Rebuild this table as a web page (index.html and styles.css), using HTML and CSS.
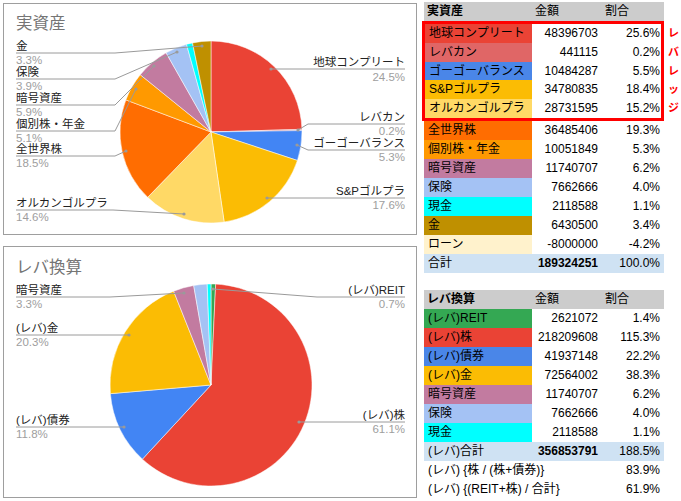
FILE: index.html
```html
<!DOCTYPE html>
<html lang="ja">
<head>
<meta charset="utf-8">
<title>資産</title>
<link rel="stylesheet" href="styles.css">
</head>
<body>
<div class="page">
  <div class="charts">
    <div class="chart">
      <svg class="pie" width="412" height="230" viewBox="4 4 412 230" xmlns="http://www.w3.org/2000/svg">
        <text class="ttl" x="16" y="29">実資産</text>
        <g class="slices">
          <path fill="#ea4335" d="M211 132 L211 41 A91 91 0 0 1 301.96 129.30 Z"/>
          <path fill="#e06666" d="M211 132 L301.96 129.30 A91 91 0 0 1 301.99 130.57 Z"/>
          <path fill="#4285f4" d="M211 132 L301.99 130.57 A91 91 0 0 1 297.43 160.47 Z"/>
          <path fill="#fbbc04" d="M211 132 L297.43 160.47 A91 91 0 0 1 224.16 222.04 Z"/>
          <path fill="#ffd966" d="M211 132 L224.16 222.04 A91 91 0 0 1 147.67 197.35 Z"/>
          <path fill="#ff6d01" d="M211 132 L147.67 197.35 A91 91 0 0 1 125.85 99.89 Z"/>
          <path fill="#ff9900" d="M211 132 L125.85 99.89 A91 91 0 0 1 140.28 74.73 Z"/>
          <path fill="#c27ba0" d="M211 132 L140.28 74.73 A91 91 0 0 1 166.08 52.86 Z"/>
          <path fill="#a4c2f4" d="M211 132 L166.08 52.86 A91 91 0 0 1 186.53 44.35 Z"/>
          <path fill="#00ffff" d="M211 132 L186.53 44.35 A91 91 0 0 1 192.50 42.90 Z"/>
          <path fill="#bf9000" d="M211 132 L192.50 42.90 A91 91 0 0 1 211 41 Z"/>
        </g>
        <g class="leaders">
          <polyline points="16,53 115,53 202,46"/>
          <polyline points="16,79 115,79 177,52"/>
          <polyline points="16,105 115,105 154,66"/>
          <polyline points="16,131 115,131 136,89"/>
          <polyline points="16,156 115,156 126,151"/>
          <polyline points="16,210 113,210 184,214"/>
          <polyline points="271,69 405,69"/>
          <polyline points="298,130 308,124 405,124"/>
          <polyline points="297,145 308,150 405,150"/>
          <polyline points="267,198 405,198"/>
        </g>
        <g class="dots">
          <circle cx="202" cy="46" r="1.6"/>
          <circle cx="177" cy="52" r="1.6"/>
          <circle cx="154" cy="66" r="1.6"/>
          <circle cx="136" cy="89" r="1.6"/>
          <circle cx="126" cy="151" r="1.6"/>
          <circle cx="184" cy="214" r="1.6"/>
          <circle cx="271" cy="69" r="1.6"/>
          <circle cx="298" cy="130" r="1.6"/>
          <circle cx="297" cy="145" r="1.6"/>
          <circle cx="267" cy="198" r="1.6"/>
        </g>
        <g class="labels">
          <text class="lbl" x="16" y="50">金</text>
          <text class="pct" x="16" y="63.5">3.3%</text>
          <text class="lbl" x="16" y="76">保険</text>
          <text class="pct" x="16" y="89.5">3.9%</text>
          <text class="lbl" x="16" y="102">暗号資産</text>
          <text class="pct" x="16" y="115.5">5.9%</text>
          <text class="lbl" x="16" y="128">個別株・年金</text>
          <text class="pct" x="16" y="141.5">5.1%</text>
          <text class="lbl" x="16" y="153">全世界株</text>
          <text class="pct" x="16" y="166.5">18.5%</text>
          <text class="lbl" x="16" y="207">オルカンゴルプラ</text>
          <text class="pct" x="16" y="220.5">14.6%</text>
        </g>
        <g class="labels end">
          <text class="lbl" x="405" y="66">地球コンプリート</text>
          <text class="pct" x="405" y="80.5">24.5%</text>
          <text class="lbl" x="405" y="121">レバカン</text>
          <text class="pct" x="405" y="134.5">0.2%</text>
          <text class="lbl" x="405" y="147">ゴーゴーバランス</text>
          <text class="pct" x="405" y="160.5">5.3%</text>
          <text class="lbl" x="405" y="195">S&amp;Pゴルプラ</text>
          <text class="pct" x="405" y="208.5">17.6%</text>
        </g>
      </svg>
    </div>
    <div class="chart">
      <svg class="pie" width="412" height="250" viewBox="4 247 412 250" xmlns="http://www.w3.org/2000/svg">
        <text class="ttl" x="16" y="273">レバ換算</text>
        <g class="slices">
          <path fill="#34a853" d="M211 385 L211 284 A101 101 0 0 1 215.66 284.11 Z"/>
          <path fill="#ea4335" d="M211 385 L215.66 284.11 A101 101 0 1 1 142.40 459.13 Z"/>
          <path fill="#4285f4" d="M211 385 L142.40 459.13 A101 101 0 0 1 110.37 393.65 Z"/>
          <path fill="#fbbc04" d="M211 385 L110.37 393.65 A101 101 0 0 1 173.64 291.16 Z"/>
          <path fill="#c27ba0" d="M211 385 L173.64 291.16 A101 101 0 0 1 193.69 285.49 Z"/>
          <path fill="#a4c2f4" d="M211 385 L193.69 285.49 A101 101 0 0 1 207.23 284.07 Z"/>
          <path fill="#00ffff" d="M211 385 L207.23 284.07 A101 101 0 0 1 211 284 Z"/>
        </g>
        <g class="leaders">
          <polyline points="16,297 110,297 184,293"/>
          <polyline points="16,335 129,335"/>
          <polyline points="16,427 124,427"/>
          <polyline points="213,289 317,297 405,297"/>
          <polyline points="299,422 405,422"/>
        </g>
        <g class="dots">
          <circle cx="184" cy="293" r="1.6"/>
          <circle cx="129" cy="335" r="1.6"/>
          <circle cx="124" cy="427" r="1.6"/>
          <circle cx="213" cy="289" r="1.6"/>
          <circle cx="299" cy="422" r="1.6"/>
        </g>
        <g class="labels">
          <text class="lbl" x="16" y="294">暗号資産</text>
          <text class="pct" x="16" y="308">3.3%</text>
          <text class="lbl" x="16" y="332">(レバ)金</text>
          <text class="pct" x="16" y="346">20.3%</text>
          <text class="lbl" x="16" y="424">(レバ)債券</text>
          <text class="pct" x="16" y="438">11.8%</text>
        </g>
        <g class="labels end">
          <text class="lbl" x="405" y="294">(レバ)REIT</text>
          <text class="pct" x="405" y="308">0.7%</text>
          <text class="lbl" x="405" y="419">(レバ)株</text>
          <text class="pct" x="405" y="433">61.1%</text>
        </g>
      </svg>
    </div>
  </div>

  <div class="tables">
    <div class="sheet">
      <div class="row head"><span class="c1">実資産</span><span class="c2">金額</span><span class="c3">割合</span></div>
      <div class="lev-group">
        <div class="lev-box">
          <div class="row"><span class="c1 k-earth">地球コンプリート</span><span class="c2">48396703</span><span class="c3">25.6%</span></div>
          <div class="row"><span class="c1 k-levkan">レバカン</span><span class="c2">441115</span><span class="c3">0.2%</span></div>
          <div class="row"><span class="c1 k-blue">ゴーゴーバランス</span><span class="c2">10484287</span><span class="c3">5.5%</span></div>
          <div class="row"><span class="c1 k-yellow">S&amp;Pゴルプラ</span><span class="c2">34780835</span><span class="c3">18.4%</span></div>
          <div class="row"><span class="c1 k-light">オルカンゴルプラ</span><span class="c2">28731595</span><span class="c3">15.2%</span></div>
        </div>
        <div class="lev-note"><span>レ</span><span>バ</span><span>レ</span><span>ッ</span><span>ジ</span></div>
      </div>
      <div class="row"><span class="c1 k-world">全世界株</span><span class="c2">36485406</span><span class="c3">19.3%</span></div>
      <div class="row"><span class="c1 k-orange">個別株・年金</span><span class="c2">10051849</span><span class="c3">5.3%</span></div>
      <div class="row"><span class="c1 k-crypto">暗号資産</span><span class="c2">11740707</span><span class="c3">6.2%</span></div>
      <div class="row"><span class="c1 k-ins">保険</span><span class="c2">7662666</span><span class="c3">4.0%</span></div>
      <div class="row"><span class="c1 k-cash">現金</span><span class="c2">2118588</span><span class="c3">1.1%</span></div>
      <div class="row"><span class="c1 k-gold">金</span><span class="c2">6430500</span><span class="c3">3.4%</span></div>
      <div class="row"><span class="c1 k-loan">ローン</span><span class="c2">-8000000</span><span class="c3">-4.2%</span></div>
      <div class="row total"><span class="c1">合計</span><span class="c2">189324251</span><span class="c3">100.0%</span></div>
    </div>

    <div class="sheet">
      <div class="row head"><span class="c1">レバ換算</span><span class="c2">金額</span><span class="c3">割合</span></div>
      <div class="row"><span class="c1 k-green">(レバ)REIT</span><span class="c2">2621072</span><span class="c3">1.4%</span></div>
      <div class="row"><span class="c1 k-earth">(レバ)株</span><span class="c2">218209608</span><span class="c3">115.3%</span></div>
      <div class="row"><span class="c1 k-blue">(レバ)債券</span><span class="c2">41937148</span><span class="c3">22.2%</span></div>
      <div class="row"><span class="c1 k-yellow">(レバ)金</span><span class="c2">72564002</span><span class="c3">38.3%</span></div>
      <div class="row"><span class="c1 k-crypto">暗号資産</span><span class="c2">11740707</span><span class="c3">6.2%</span></div>
      <div class="row"><span class="c1 k-ins">保険</span><span class="c2">7662666</span><span class="c3">4.0%</span></div>
      <div class="row"><span class="c1 k-cash">現金</span><span class="c2">2118588</span><span class="c3">1.1%</span></div>
      <div class="row total"><span class="c1">(レバ)合計</span><span class="c2">356853791</span><span class="c3">188.5%</span></div>
      <div class="row note"><span class="wide">(レバ) {株 / (株+債券)}</span><span class="c3">83.9%</span></div>
      <div class="row note"><span class="wide">(レバ) {(REIT+株) / 合計}</span><span class="c3">61.9%</span></div>
    </div>
  </div>
</div>
</body>
</html>
```

FILE: styles.css
```css
html, body {
  margin: 0;
  padding: 0;
  background: #ffffff;
}

body {
  font-family: "Liberation Sans", "Noto Sans CJK JP", sans-serif;
  font-size: 12px;
  color: #000000;
}

.page {
  display: flex;
  align-items: flex-start;
  width: 681px;
  height: 501px;
  overflow: hidden;
}

/* ---------- charts ---------- */
.charts {
  display: flex;
  flex-direction: column;
  gap: 11px;
  margin-left: 3px;
  padding-top: 3px;
  flex-shrink: 0;
}

.chart {
  border: 1px solid #9e9e9e;
  background: #ffffff;
}

.pie {
  display: block;
  font-family: "Liberation Sans", "Noto Sans CJK JP", sans-serif;
}

.slices path {
  stroke: #ffffff;
  stroke-width: 0.5;
}

.leaders polyline {
  fill: none;
  stroke: #9a9a9a;
  stroke-width: 1;
}

.dots circle {
  fill: #9a9a9a;
}

.ttl {
  font-size: 16.5px;
  fill: #757575;
}

.lbl {
  font-size: 11.5px;
  fill: #222222;
}

.pct {
  font-size: 11.5px;
  fill: #9e9e9e;
}

.labels.end text {
  text-anchor: end;
}

/* ---------- tables ---------- */
.tables {
  display: flex;
  flex-direction: column;
  gap: 17px;
  margin-left: 7px;
  padding-top: 2px;
  flex-shrink: 0;
}

.sheet {
  display: flex;
  flex-direction: column;
}

.row {
  display: grid;
  grid-template-columns: 108px 69px 63px;
  width: 240px;
  height: 19px;
  line-height: 19px;
  white-space: nowrap;
}

.row > span {
  display: block;
  overflow: hidden;
}

.c1 {
  padding-left: 4px;
}

.c2 {
  text-align: right;
  padding-right: 3px;
}

.c3 {
  text-align: right;
  padding-right: 4px;
}

.head {
  background: #cccccc;
}

.head .c1 {
  padding-left: 3px;
  font-weight: bold;
}

.head .c2 {
  text-align: left;
  padding-left: 3px;
  padding-right: 0;
}

.head .c3 {
  text-align: left;
  padding-left: 4px;
  padding-right: 0;
}

.total {
  background: #cfe2f3;
}

.total .c2 {
  font-weight: bold;
}

.note .wide {
  grid-column: 1 / 3;
  padding-left: 4px;
}

/* leverage group with red frame */
.lev-group {
  display: flex;
  align-items: flex-start;
}

.lev-box {
  border: 3px solid #ff0000;
  margin-left: -2px;
}

.lev-box .row {
  grid-template-columns: 107px 69px 60px;
  width: 236px;
  height: 18.8px;
  line-height: 18.8px;
}

.lev-box .c3 {
  padding-right: 1px;
}

.lev-note {
  display: flex;
  flex-direction: column;
  padding: 3px 0 0 4px;
  color: #ff0000;
  font-weight: bold;
  font-size: 11px;
}

.lev-note span {
  height: 18.8px;
  line-height: 18.8px;
}

/* category colours */
.k-earth  { background: #ea4335; }
.k-levkan { background: #e06666; }
.k-blue   { background: #4a86e8; }
.k-yellow { background: #fbbc04; }
.k-light  { background: #ffd966; }
.k-world  { background: #ff6d01; }
.k-orange { background: #ff9900; }
.k-crypto { background: #c27ba0; }
.k-ins    { background: #a4c2f4; }
.k-cash   { background: #00ffff; }
.k-gold   { background: #bf9000; }
.k-loan   { background: #fff2cc; }
.k-green  { background: #34a853; }
```
